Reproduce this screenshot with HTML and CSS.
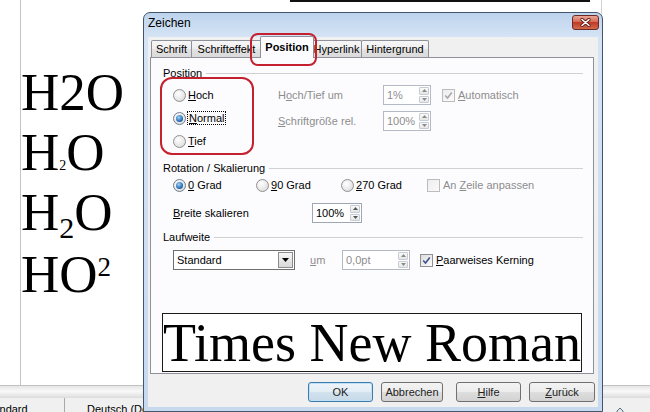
FILE: index.html
```html
<!DOCTYPE html>
<html lang="de">
<head>
  <meta charset="UTF-8">
  <title>Zeichen</title>
  <link rel="stylesheet" href="styles.css">
</head>
<body>
<div class="screen">

  <!-- Document behind the dialog -->
  <div class="page">
    <div class="rule"></div>
    <div class="formulas">
      <div class="formula">H2O</div>
      <div class="formula">H<span class="sub-small">2</span>O</div>
      <div class="formula">H<span class="sub-big">2</span>O</div>
      <div class="formula last">HO<span class="sup-big">2</span></div>
    </div>
  </div>
  <div class="hbar"></div>
  <div class="status">
    <div class="cell cell-style">Standard</div>
    <div class="cell cell-lang">Deutsch (Deutschland)</div>
    <div class="cell cell-zoom">
      <svg width="40" height="8" viewBox="0 0 40 8"><line x1="0" y1="6.5" x2="40" y2="6.5" stroke="#9aa3ad"/><path d="M17 8 L17 4 L20 1 L23 4 L23 8 Z" fill="#dfe6ee" stroke="#5a6b7d"/></svg>
    </div>
  </div>

  <!-- Dialog -->
  <div class="dialog">
    <div class="titlebar">
      <span class="title">Zeichen</span>
      <span class="close">
        <svg width="11" height="9" viewBox="0 0 11 9"><path d="M2 1.5 L9 7.5 M9 1.5 L2 7.5" stroke="#5a1c14" stroke-width="3.2" stroke-linecap="round"/><path d="M2 1.5 L9 7.5 M9 1.5 L2 7.5" stroke="#fff" stroke-width="1.6" stroke-linecap="round"/></svg>
      </span>
    </div>

    <div class="client">
      <div class="tabs">
        <div class="tab w41">Schrift</div>
        <div class="tab w71">Schrifteffekt</div>
        <div class="tab active">Position</div>
        <div class="tab w51">Hyperlink</div>
        <div class="tab w68">Hintergrund</div>
      </div>

      <div class="panel">
        <div class="group-head">Position</div>
        <div class="pos-body">
          <div class="pos-radios">
            <div class="opt"><span class="radio"></span><span><u>H</u>och</span></div>
            <div class="opt"><span class="radio on"></span><span class="focus"><u>N</u>ormal</span></div>
            <div class="opt"><span class="radio"></span><span><u>T</u>ief</span></div>
          </div>
          <div class="pos-fields">
            <div class="field">
              <span class="label dis w105">H<u>o</u>ch/Tief um</span>
              <div class="spin dis w48">
                <span class="val">1%</span>
                <span class="arrows"><span class="arrow"><svg width="5" height="3" viewBox="0 0 5 3"><path d="M0 3 L2.5 0 L5 3 Z" fill="#8a8a8a"/></svg></span><span class="arrow"><svg width="5" height="3" viewBox="0 0 5 3"><path d="M0 0 L2.5 3 L5 0 Z" fill="#8a8a8a"/></svg></span></span>
              </div>
              <div class="opt chk dis ml11">
                <span class="check dis"><svg width="9" height="9" viewBox="0 0 9 9"><path d="M1.2 4.6 L3.5 7 L7.8 1.5" fill="none" stroke="#a6a6a6" stroke-width="1.5"/></svg></span>
                <span><u>A</u>utomatisch</span>
              </div>
            </div>
            <div class="field">
              <span class="label dis w105"><u>S</u>chriftgröße rel.</span>
              <div class="spin dis w48">
                <span class="val">100%</span>
                <span class="arrows"><span class="arrow"><svg width="5" height="3" viewBox="0 0 5 3"><path d="M0 3 L2.5 0 L5 3 Z" fill="#8a8a8a"/></svg></span><span class="arrow"><svg width="5" height="3" viewBox="0 0 5 3"><path d="M0 0 L2.5 3 L5 0 Z" fill="#8a8a8a"/></svg></span></span>
              </div>
            </div>
          </div>
        </div>

        <div class="group-head mt9">Rotation / Skalierung</div>
        <div class="rot-row">
          <div class="opt w83"><span class="radio on"></span><span><u>0</u> Grad</span></div>
          <div class="opt w85"><span class="radio"></span><span><u>9</u>0 Grad</span></div>
          <div class="opt w86"><span class="radio"></span><span><u>2</u>70 Grad</span></div>
          <div class="opt chk dis"><span class="check dis"></span><span>An <u>Z</u>eile anpassen</span></div>
        </div>

        <div class="scale-row">
          <span class="label w139"><u>B</u>reite skalieren</span>
          <div class="spin w50">
            <span class="val">100%</span>
            <span class="arrows"><span class="arrow"><svg width="5" height="3" viewBox="0 0 5 3"><path d="M0 3 L2.5 0 L5 3 Z" fill="#555"/></svg></span><span class="arrow"><svg width="5" height="3" viewBox="0 0 5 3"><path d="M0 0 L2.5 3 L5 0 Z" fill="#555"/></svg></span></span>
          </div>
        </div>

        <div class="group-head mt7">Laufweite</div>
        <div class="track-row">
          <div class="select">
            <span class="val">Standard</span>
            <span class="drop"><svg width="7" height="4" viewBox="0 0 7 4"><path d="M0 0 L3.5 4 L7 0 Z" fill="#000"/></svg></span>
          </div>
          <span class="label dis um"><u>u</u>m</span>
          <div class="spin dis w68">
            <span class="val">0,0pt</span>
            <span class="arrows"><span class="arrow"><svg width="5" height="3" viewBox="0 0 5 3"><path d="M0 3 L2.5 0 L5 3 Z" fill="#8a8a8a"/></svg></span><span class="arrow"><svg width="5" height="3" viewBox="0 0 5 3"><path d="M0 0 L2.5 3 L5 0 Z" fill="#8a8a8a"/></svg></span></span>
          </div>
          <div class="opt chk ml10">
            <span class="check"><svg width="9" height="9" viewBox="0 0 9 9"><path d="M1.2 4.6 L3.5 7 L7.8 1.5" fill="none" stroke="#3b4f8c" stroke-width="1.5"/></svg></span>
            <span><u>P</u>aarweises Kerning</span>
          </div>
        </div>

        <div class="preview">Times New Roman</div>
      </div>

      <div class="buttons">
        <button class="btn default w65">OK</button>
        <button class="btn w62 ml8">Abbrechen</button>
        <button class="btn w65 ml13"><u>H</u>ilfe</button>
        <button class="btn w66 ml8"><u>Z</u>urück</button>
      </div>
    </div>
  </div>

  <!-- Red annotation marks -->
  <div class="mark mark-tab"></div>
  <div class="mark mark-radios"></div>
</div>
</body>
</html>
```

FILE: styles.css
```css
body {
  margin: 0;
  font-family: "Liberation Sans", Arial, sans-serif;
  font-size: 11px;
  color: #000;
}

.screen {
  position: relative;
  width: 650px;
  height: 412px;
  overflow: hidden;
  background: #fff;
}

/* document */
.page {
  margin-left: 20px;
  width: 582px;
  height: 385px;
  box-sizing: border-box;
  border-left: 1px solid #c4c4c4;
  border-right: 1px solid #d4d4d4;
}

.rule {
  margin-left: 269px;
  width: 300px;
  height: 2px;
  background: #111;
}

.formulas {
  margin-top: 60px;
  font-family: "Liberation Serif", "Times New Roman", serif;
  font-size: 53px;
}

.formula {
  height: 60px;
  line-height: 60px;
  white-space: nowrap;
}

.formula.last {
  margin-top: 2px;
}

.sub-small {
  font-size: 14px;
  line-height: 0;
}

.sub-big {
  font-size: 30px;
  line-height: 0;
  vertical-align: -8px;
}

.sup-big {
  font-size: 27px;
  line-height: 0;
  vertical-align: 16px;
}

.hbar {
  height: 13px;
  box-sizing: border-box;
  border-top: 1px solid #c2c2c2;
  background: linear-gradient(#e6e6e6, #f8f8f8 45%, #dcdcdc);
}

.status {
  display: flex;
  height: 14px;
  overflow: hidden;
  background: #f0f0f0;
}

.cell {
  padding-top: 4px;
  line-height: 14px;
  white-space: nowrap;
}

.cell-style {
  width: 65px;
  box-sizing: border-box;
  border-right: 1px solid #a8a8a8;
  text-indent: -17px;
  overflow: hidden;
}

.cell-lang {
  padding-left: 22px;
  flex: 1;
}

.cell-zoom {
  padding-top: 6px;
  margin-right: 10px;
}

/* dialog window */
.dialog {
  position: absolute;
  left: 143px;
  top: 12px;
  width: 460px;
  height: 400px;
  box-sizing: border-box;
  border: 1px solid #44546a;
  border-radius: 7px 7px 0 0;
  background: linear-gradient(#bdd3ed, #d5e4f5 24px, #c6d9ef);
  padding: 0 4px 4px;
  display: flex;
  flex-direction: column;
}

.titlebar {
  height: 24px;
  display: flex;
  justify-content: space-between;
  align-items: flex-start;
}

.title {
  margin-top: 3px;
  font-size: 12px;
  line-height: 15px;
}

.close {
  margin-top: 2px;
  margin-right: -1px;
  width: 27px;
  height: 15px;
  box-sizing: border-box;
  border: 1px solid #6b2a24;
  border-radius: 3px;
  background: linear-gradient(#e9a797, #d46a55 45%, #c13b27 50%, #d06a4e);
  display: flex;
  align-items: center;
  justify-content: center;
}

.client {
  flex: 1;
  background: #f0f0f0;
  padding: 0 4px 0 2px;
}

/* tabs */
.tabs {
  display: flex;
  align-items: flex-end;
  height: 21px;
  padding-left: 1px;
}

.tab {
  height: 17px;
  margin-bottom: 1px;
  box-sizing: border-box;
  border: 1px solid #8e9199;
  border-bottom: none;
  border-radius: 2px 2px 0 0;
  background: linear-gradient(#f7f7f7, #eeeeee 50%, #e3e3e3 50%, #dadada);
  line-height: 16px;
  text-align: center;
  white-space: nowrap;
  overflow: hidden;
}

.tab + .tab {
  margin-left: -1px;
}

.tab.active {
  position: relative;
  z-index: 1;
  width: 54px;
  height: 22px;
  margin: 0 -2px 0 -2px;
  background: #fcfcfe;
  font-weight: bold;
  line-height: 20px;
}

.panel {
  margin-top: -1px;
  height: 317px;
  box-sizing: border-box;
  border: 1px solid #8e9199;
  background: #fcfcfe;
  padding: 8px 10px 0 12px;
}

.group-head {
  display: flex;
  align-items: center;
  height: 14px;
  line-height: 14px;
}

.group-head::after {
  content: "";
  flex: 1;
  margin-left: 4px;
  border-top: 1px solid #d0d0d0;
}

.mt9 { margin-top: 9px; }
.mt7 { margin-top: 7px; }
.ml8 { margin-left: 8px; }
.ml10 { margin-left: 10px; }
.ml11 { margin-left: 11px; }
.ml13 { margin-left: 13px; }

.w41 { width: 41px; }
.w48 { width: 48px; }
.w50 { width: 50px; }
.w51 { width: 51px; }
.w62 { width: 62px; }
.w65 { width: 65px; }
.w66 { width: 66px; }
.w68 { width: 68px; }
.w71 { width: 71px; }
.w83 { width: 83px; }
.w85 { width: 85px; }
.w86 { width: 86px; }
.w105 { width: 105px; }
.w139 { width: 139px; }

.pos-body {
  display: flex;
  align-items: flex-start;
}

.pos-radios {
  width: 105px;
  padding-left: 10px;
  margin-top: 4px;
  display: flex;
  flex-direction: column;
  gap: 1px;
}

.pos-radios .opt {
  height: 22px;
}

.pos-fields {
  margin-top: 5px;
  display: flex;
  flex-direction: column;
  gap: 6px;
}

.field {
  display: flex;
  align-items: center;
  height: 20px;
}

.opt {
  display: flex;
  align-items: center;
  gap: 2px;
  white-space: nowrap;
}

.opt.chk {
  gap: 3px;
}

.dis {
  color: #8d8d8d;
}

.label {
  flex: none;
  white-space: nowrap;
}

.focus {
  outline: 1px dotted #000;
  padding: 0 1px;
}

.radio {
  flex: none;
  width: 13px;
  height: 13px;
  box-sizing: border-box;
  border-radius: 50%;
  border: 1px solid #909090;
  background: radial-gradient(circle at 40% 35%, #ffffff, #e2e2e2 70%, #cfcfcf);
  display: flex;
  align-items: center;
  justify-content: center;
}

.radio.on {
  border-color: #6f7d8c;
}

.radio.on::after {
  content: "";
  width: 7px;
  height: 7px;
  border-radius: 50%;
  background: radial-gradient(circle at 40% 35%, #9fd3f7, #2a6fb5 60%, #0f3e76);
}

.check {
  flex: none;
  width: 13px;
  height: 13px;
  box-sizing: border-box;
  border: 1px solid #8e8f8f;
  background: linear-gradient(135deg, #dcdcdc, #fbfbfb);
  display: flex;
  align-items: center;
  justify-content: center;
}

.check.dis {
  border-color: #bcbcbc;
  background: linear-gradient(135deg, #ececec, #fbfbfb);
}

/* spin fields */
.spin {
  flex: none;
  display: flex;
  height: 20px;
  box-sizing: border-box;
  border: 1px solid #9ea7b3;
  background: #fff;
}

.spin.dis {
  border-color: #b4bac3;
}

.spin .val {
  flex: 1;
  padding-left: 3px;
  line-height: 18px;
}

.arrows {
  width: 10px;
  padding: 1px 1px 1px 0;
  display: flex;
  flex-direction: column;
  gap: 1px;
}

.arrow {
  flex: 1;
  border: 1px solid #c5ccd6;
  border-radius: 1px;
  background: linear-gradient(#fafafa, #e6e6e6);
  display: flex;
  align-items: center;
  justify-content: center;
}

.rot-row {
  margin-top: 1px;
  height: 18px;
  padding-left: 10px;
  display: flex;
  align-items: center;
}

.scale-row {
  margin-top: 9px;
  height: 20px;
  padding-left: 10px;
  display: flex;
  align-items: center;
}

.track-row {
  margin-top: 6px;
  height: 20px;
  padding-left: 10px;
  display: flex;
  align-items: center;
}

.select {
  flex: none;
  width: 122px;
  height: 20px;
  box-sizing: border-box;
  border: 1px solid #6f6f6f;
  background: #fff;
  display: flex;
}

.select .val {
  flex: 1;
  padding-left: 3px;
  line-height: 18px;
}

.select .drop {
  width: 15px;
  margin: 1px;
  box-sizing: border-box;
  border: 1px solid #8c8c8c;
  background: linear-gradient(#f6f6f6, #d8d8d8);
  display: flex;
  align-items: center;
  justify-content: center;
}

.um {
  width: 32px;
  margin-left: 15px;
}

.preview {
  margin-top: 43px;
  margin-left: -1px;
  width: 420px;
  height: 59px;
  box-sizing: border-box;
  border: 1px solid #1a1a1a;
  background: #fff;
  font-family: "Liberation Serif", "Times New Roman", serif;
  font-size: 54px;
  line-height: 59px;
  white-space: nowrap;
  overflow: hidden;
}

/* buttons */
.buttons {
  display: flex;
  justify-content: flex-end;
  margin-top: 8px;
  margin-right: -1px;
}

.btn {
  height: 20px;
  padding: 0;
  box-sizing: border-box;
  border: 1px solid #707070;
  border-radius: 3px;
  background: linear-gradient(#f3f3f3, #ececec 50%, #dedede 50%, #d2d2d2);
  font-family: "Liberation Sans", Arial, sans-serif;
  font-size: 11px;
  color: #222;
}

.btn.default {
  border-color: #3d7bad;
  background: linear-gradient(#eef5fa, #e2edf5 50%, #d2e2ee 50%, #c6d9e8);
  box-shadow: inset 0 0 0 1px #bfe0f5;
}

/* red annotation marks */
.mark {
  position: absolute;
  border: 2px solid #c5202e;
  box-sizing: border-box;
}

.mark-tab {
  left: 250px;
  top: 33px;
  width: 67px;
  height: 33px;
  border-radius: 8px;
}

.mark-radios {
  left: 160px;
  top: 77px;
  width: 94px;
  height: 78px;
  border-radius: 12px;
}
```
